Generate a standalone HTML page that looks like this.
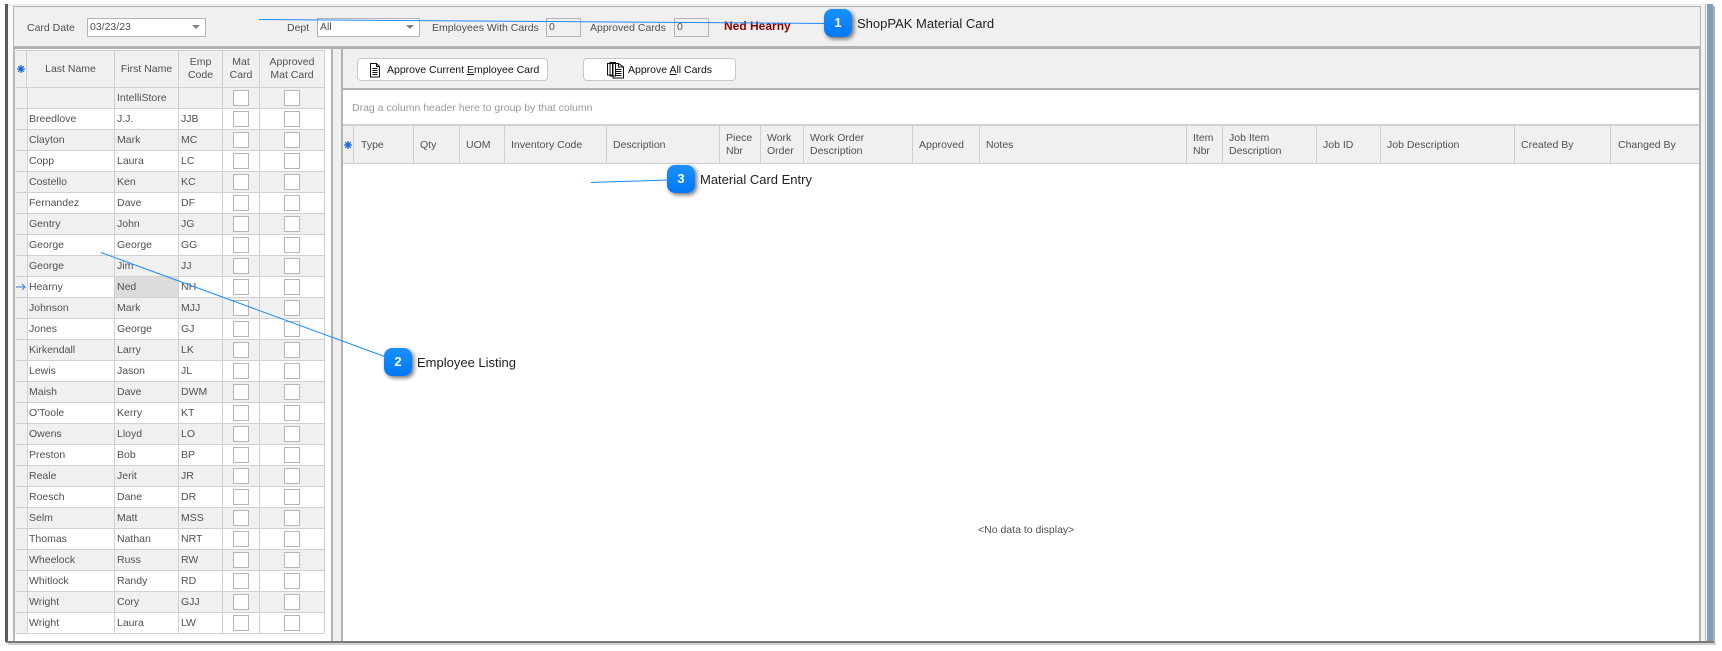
<!DOCTYPE html>
<html><head><meta charset="utf-8"><title>ShopPAK Material Card</title>
<style>
html,body{margin:0;padding:0;background:#fff;width:1722px;height:651px;overflow:hidden}
body{position:relative;font:10.5px/13px "Liberation Sans",sans-serif;color:#505050}
div,span,svg{position:absolute;box-sizing:border-box}
.l{white-space:nowrap}
.in{height:19px;top:18px;background:#fff;border:1px solid #b4b4b4;padding:1px 0 0 2px;line-height:14px}
.tri{width:0;height:0;border:4px solid transparent;border-top:4px solid #808080;border-bottom:0;top:25px}
.h{height:38px;position:absolute;top:0;background:#f0f0f0;border-right:1px solid #d0d0d0;border-bottom:1px solid #d0d0d0;border-top:1px solid #d0d0d0;text-align:center;display:flex;align-items:center;justify-content:center;line-height:13px}
#rows{left:16px;top:88px;width:309px}
.r{position:relative;height:21px;width:309px;border-bottom:1px solid #d0d0d0;background:#fff;border-right:1px solid #d0d0d0}
.r.a{background:#f0f0f0}
.r b,.r i,.r u,.r s,.r em{position:absolute;font:inherit;text-decoration:none;top:0;height:20px;line-height:20px;white-space:nowrap;color:#505050}
.r s{left:0;width:11px;background:#f0f0f0;border-right:1px solid #d0d0d0;height:20px}
.r b{left:13px;width:85px}
.r i{left:101px}
.r u{left:165px}
.c1,.c2,.c3,.c4{position:absolute;top:0;height:20px;width:1px;background:#d0d0d0}
.c1{left:98px}.c2{left:162px}.c3{left:206px}.c4{left:243px}
.k1,.k2{position:absolute;top:2px;width:16px;height:16px;background:#fff;border:1px solid #b6b6b6}
.k1{left:217px}.k2{left:268px}
.hc{position:absolute;top:126px;height:38px;border-right:1px solid #d0d0d0;border-bottom:1px solid #d0d0d0;background:#f0f0f0;display:flex;align-items:center;padding-left:5px;padding-top:1px;line-height:13px;white-space:nowrap}
.btn{top:58px;height:23px;background:#fff;border:1px solid #c8c8c8;border-radius:4px;color:#111;line-height:23px;white-space:nowrap}
.bd{width:28px;height:28px;border-radius:8px;background:linear-gradient(#1b90ff,#0078f5);box-shadow:2px 2px 4px rgba(0,0,0,.55);color:#fff;font:bold 13px/28px "Liberation Sans",sans-serif;text-align:center}
.ct{font-size:13px;line-height:16px;color:#222;white-space:nowrap}
</style></head><body>

<!-- window frame -->
<div style="left:5px;top:4px;width:3px;height:638px;background:#5a5a5a"></div>
<div style="left:8px;top:4px;width:1699px;height:2px;background:#eee"></div>
<div style="left:8px;top:6px;width:5px;height:635px;background:#fafafa"></div>
<div style="left:1701px;top:4px;width:4px;height:638px;background:#f4f4f4"></div>
<div style="left:1705px;top:4px;width:1px;height:638px;background:#b4b4b4"></div>
<div style="left:1707px;top:4px;width:6px;height:638px;background:#7f9fbc"></div>
<div style="left:1713px;top:6px;width:2px;height:637px;background:#b0b0b0"></div>
<div style="left:6px;top:641px;width:1708px;height:2px;background:#7a7a7a"></div>
<div style="left:8px;top:643px;width:1708px;height:2px;background:#d0d0d0"></div>

<!-- top panel -->
<div style="left:13px;top:6px;width:1688px;height:41px;background:#f0f0f0;border:1px solid #b4b4b4;border-bottom:0"></div>
<div style="left:13px;top:46px;width:1688px;height:3px;background:#b2b2b2"></div>
<div class="l" style="left:27px;top:22px">Card Date</div>
<div class="in" style="left:87px;width:119px">03/23/23</div><div class="tri" style="left:192px"></div>
<div class="l" style="left:287px;top:22px">Dept</div>
<div class="in" style="left:317px;width:103px">All</div><div class="tri" style="left:406px"></div>
<div class="l" style="left:432px;top:22px">Employees With Cards</div>
<div class="in" style="left:546px;width:35px;background:#f0f0f0">0</div>
<div class="l" style="left:590px;top:22px">Approved Cards</div>
<div class="in" style="left:674px;width:35px;background:#f0f0f0">0</div>
<div class="l" style="left:724px;top:20px;font-weight:bold;font-size:12px;color:#8b0000">Ned Hearny</div>

<!-- left region -->
<div style="left:13px;top:49px;width:2px;height:592px;background:#b8b8b8"></div>
<div style="left:15px;top:49px;width:316px;height:592px;background:#fff"></div>
<div style="left:15px;top:49px;width:1px;height:585px;background:#f0f0f0"></div>
<div style="left:331px;top:49px;width:2px;height:592px;background:#b2b2b2"></div>
<div style="left:333px;top:49px;width:8px;height:592px;background:#f0f0f0"></div>
<div style="left:341px;top:49px;width:2px;height:592px;background:#b2b2b2"></div>

<!-- left grid header -->
<div class="h" style="left:16px;top:50px;width:11px"><svg width="10" height="10" viewBox="0 0 10 10" style="left:0;top:13px"><g stroke="#1f6fe0" stroke-width="1.3"><path d="M5 1V9M1 5H9M2.2 2.2L7.8 7.8M7.8 2.2L2.2 7.8"/></g><circle cx="5" cy="5" r="2.4" fill="#1f6fe0"/></svg></div>
<div class="h" style="left:27px;top:50px;width:88px">Last Name</div>
<div class="h" style="left:115px;top:50px;width:64px">First Name</div>
<div class="h" style="left:179px;top:50px;width:44px">Emp<br>Code</div>
<div class="h" style="left:223px;top:50px;width:37px">Mat<br>Card</div>
<div class="h" style="left:260px;top:50px;width:65px">Approved<br>Mat Card</div>

<!-- left grid rows -->
<div id="rows">
<div class="r a"><s></s><b></b><i>IntelliStore</i><u></u><span class="c1"></span><span class="c2"></span><span class="c3"></span><span class="c4"></span><span class="k1"></span><span class="k2"></span></div>
<div class="r"><s></s><b>Breedlove</b><i>J.J.</i><u>JJB</u><span class="c1"></span><span class="c2"></span><span class="c3"></span><span class="c4"></span><span class="k1"></span><span class="k2"></span></div>
<div class="r a"><s></s><b>Clayton</b><i>Mark</i><u>MC</u><span class="c1"></span><span class="c2"></span><span class="c3"></span><span class="c4"></span><span class="k1"></span><span class="k2"></span></div>
<div class="r"><s></s><b>Copp</b><i>Laura</i><u>LC</u><span class="c1"></span><span class="c2"></span><span class="c3"></span><span class="c4"></span><span class="k1"></span><span class="k2"></span></div>
<div class="r a"><s></s><b>Costello</b><i>Ken</i><u>KC</u><span class="c1"></span><span class="c2"></span><span class="c3"></span><span class="c4"></span><span class="k1"></span><span class="k2"></span></div>
<div class="r"><s></s><b>Fernandez</b><i>Dave</i><u>DF</u><span class="c1"></span><span class="c2"></span><span class="c3"></span><span class="c4"></span><span class="k1"></span><span class="k2"></span></div>
<div class="r a"><s></s><b>Gentry</b><i>John</i><u>JG</u><span class="c1"></span><span class="c2"></span><span class="c3"></span><span class="c4"></span><span class="k1"></span><span class="k2"></span></div>
<div class="r"><s></s><b>George</b><i>George</i><u>GG</u><span class="c1"></span><span class="c2"></span><span class="c3"></span><span class="c4"></span><span class="k1"></span><span class="k2"></span></div>
<div class="r a"><s></s><b>George</b><i>Jim</i><u>JJ</u><span class="c1"></span><span class="c2"></span><span class="c3"></span><span class="c4"></span><span class="k1"></span><span class="k2"></span></div>
<div class="r"><s><svg width="10" height="8" viewBox="0 0 10 8" style="left:0;top:6px"><path d="M0 4H9M6 1L9 4L6 7" fill="none" stroke="#3b78d8" stroke-width="1"/></svg></s><b>Hearny</b><span style="position:absolute;left:99px;top:0;width:63px;height:20px;background:#dcdcdc"></span><i>Ned</i><u>NH</u><span class="c1"></span><span class="c2"></span><span class="c3"></span><span class="c4"></span><span class="k1"></span><span class="k2"></span></div>
<div class="r a"><s></s><b>Johnson</b><i>Mark</i><u>MJJ</u><span class="c1"></span><span class="c2"></span><span class="c3"></span><span class="c4"></span><span class="k1"></span><span class="k2"></span></div>
<div class="r"><s></s><b>Jones</b><i>George</i><u>GJ</u><span class="c1"></span><span class="c2"></span><span class="c3"></span><span class="c4"></span><span class="k1"></span><span class="k2"></span></div>
<div class="r a"><s></s><b>Kirkendall</b><i>Larry</i><u>LK</u><span class="c1"></span><span class="c2"></span><span class="c3"></span><span class="c4"></span><span class="k1"></span><span class="k2"></span></div>
<div class="r"><s></s><b>Lewis</b><i>Jason</i><u>JL</u><span class="c1"></span><span class="c2"></span><span class="c3"></span><span class="c4"></span><span class="k1"></span><span class="k2"></span></div>
<div class="r a"><s></s><b>Maish</b><i>Dave</i><u>DWM</u><span class="c1"></span><span class="c2"></span><span class="c3"></span><span class="c4"></span><span class="k1"></span><span class="k2"></span></div>
<div class="r"><s></s><b>O'Toole</b><i>Kerry</i><u>KT</u><span class="c1"></span><span class="c2"></span><span class="c3"></span><span class="c4"></span><span class="k1"></span><span class="k2"></span></div>
<div class="r a"><s></s><b>Owens</b><i>Lloyd</i><u>LO</u><span class="c1"></span><span class="c2"></span><span class="c3"></span><span class="c4"></span><span class="k1"></span><span class="k2"></span></div>
<div class="r"><s></s><b>Preston</b><i>Bob</i><u>BP</u><span class="c1"></span><span class="c2"></span><span class="c3"></span><span class="c4"></span><span class="k1"></span><span class="k2"></span></div>
<div class="r a"><s></s><b>Reale</b><i>Jerit</i><u>JR</u><span class="c1"></span><span class="c2"></span><span class="c3"></span><span class="c4"></span><span class="k1"></span><span class="k2"></span></div>
<div class="r"><s></s><b>Roesch</b><i>Dane</i><u>DR</u><span class="c1"></span><span class="c2"></span><span class="c3"></span><span class="c4"></span><span class="k1"></span><span class="k2"></span></div>
<div class="r a"><s></s><b>Selm</b><i>Matt</i><u>MSS</u><span class="c1"></span><span class="c2"></span><span class="c3"></span><span class="c4"></span><span class="k1"></span><span class="k2"></span></div>
<div class="r"><s></s><b>Thomas</b><i>Nathan</i><u>NRT</u><span class="c1"></span><span class="c2"></span><span class="c3"></span><span class="c4"></span><span class="k1"></span><span class="k2"></span></div>
<div class="r a"><s></s><b>Wheelock</b><i>Russ</i><u>RW</u><span class="c1"></span><span class="c2"></span><span class="c3"></span><span class="c4"></span><span class="k1"></span><span class="k2"></span></div>
<div class="r"><s></s><b>Whitlock</b><i>Randy</i><u>RD</u><span class="c1"></span><span class="c2"></span><span class="c3"></span><span class="c4"></span><span class="k1"></span><span class="k2"></span></div>
<div class="r a"><s></s><b>Wright</b><i>Cory</i><u>GJJ</u><span class="c1"></span><span class="c2"></span><span class="c3"></span><span class="c4"></span><span class="k1"></span><span class="k2"></span></div>
<div class="r"><s></s><b>Wright</b><i>Laura</i><u>LW</u><span class="c1"></span><span class="c2"></span><span class="c3"></span><span class="c4"></span><span class="k1"></span><span class="k2"></span></div>
</div>

<!-- right region -->
<div style="left:343px;top:49px;width:1356px;height:39px;background:#f0f0f0"></div>
<div style="left:343px;top:88px;width:1356px;height:2px;background:#b2b2b2"></div>
<div style="left:343px;top:90px;width:1356px;height:551px;background:#fff"></div>
<div style="left:1699px;top:49px;width:2px;height:592px;background:#b2b2b2"></div>

<div class="btn" style="left:357px;width:191px;padding-left:29px">Approve Current <span style="position:static;text-decoration:underline">E</span>mployee Card</div>
<svg width="12" height="15" viewBox="0 0 12 15" style="left:369px;top:63px"><path d="M1.5 .5H7.5L10.5 3.5V14H1.5ZM7.5 .5V3.5H10.5M3.5 5.5H8.5M3.5 7.5H8.5M3.5 9.5H8.5M3.5 11.5H8.5" fill="#fff" stroke="#111" stroke-width="1"/></svg>
<div class="btn" style="left:583px;width:153px;padding-left:44px">Approve <span style="position:static;text-decoration:underline">A</span>ll Cards</div>
<svg width="18" height="17" viewBox="0 0 18 17" style="left:607px;top:62px"><path d="M.5 1.5H5.5V13H.5ZM3 .5H8.5V14H3ZM6 1.5H11.5L16.5 5V16H6ZM11.5 1.5V5H16.5M8 7.5H14.5M8 9.5H14.5M8 11.5H14.5M8 13.5H14.5" fill="#fff" stroke="#111" stroke-width="1"/></svg>

<div class="l" style="left:352px;top:102px;color:#9a9a9a">Drag a column header here to group by that column</div>

<!-- right grid header -->
<div style="left:343px;top:124px;width:1356px;height:2px;background:#d0d0d0"></div>
<div class="hc" style="left:343px;width:11px;padding:0"><svg width="10" height="10" viewBox="0 0 10 10" style="left:0;top:14px"><g stroke="#1f6fe0" stroke-width="1.3"><path d="M5 1V9M1 5H9M2.2 2.2L7.8 7.8M7.8 2.2L2.2 7.8"/></g><circle cx="5" cy="5" r="2.4" fill="#1f6fe0"/></svg></div>
<div class="hc" style="left:354px;width:60px;padding-left:7px">Type</div>
<div class="hc" style="left:414px;width:46px;padding-left:6px">Qty</div>
<div class="hc" style="left:460px;width:45px;padding-left:6px">UOM</div>
<div class="hc" style="left:505px;width:102px;padding-left:6px">Inventory Code</div>
<div class="hc" style="left:607px;width:113px;padding-left:6px">Description</div>
<div class="hc" style="left:720px;width:41px;padding-left:6px">Piece<br>Nbr</div>
<div class="hc" style="left:761px;width:43px;padding-left:6px">Work<br>Order</div>
<div class="hc" style="left:804px;width:109px;padding-left:6px">Work Order<br>Description</div>
<div class="hc" style="left:913px;width:67px;padding-left:6px">Approved</div>
<div class="hc" style="left:980px;width:207px;padding-left:6px">Notes</div>
<div class="hc" style="left:1187px;width:36px;padding-left:6px">Item<br>Nbr</div>
<div class="hc" style="left:1223px;width:94px;padding-left:6px">Job Item<br>Description</div>
<div class="hc" style="left:1317px;width:64px;padding-left:6px">Job ID</div>
<div class="hc" style="left:1381px;width:134px;padding-left:6px">Job Description</div>
<div class="hc" style="left:1515px;width:96px;padding-left:6px">Created By</div>
<div class="hc" style="left:1611px;width:88px;padding-left:7px;border-right:0">Changed By</div>

<div class="l" style="left:978px;top:524px;color:#505050">&lt;No data to display&gt;</div>

<!-- callouts -->
<svg width="1722" height="651" style="left:0;top:0"><g fill="none" stroke="#1a8cff" stroke-width="1"><path d="M259 19.5L826 23.5"/><path d="M101 252.5L386 357"/><path d="M591 182.5L669 180"/></g></svg>
<div class="bd" style="left:824px;top:9px">1</div>
<div class="ct" style="left:857px;top:16px">ShopPAK Material Card</div>
<div class="bd" style="left:384px;top:348px">2</div>
<div class="ct" style="left:417px;top:355px">Employee Listing</div>
<div class="bd" style="left:667px;top:165px">3</div>
<div class="ct" style="left:700px;top:172px">Material Card Entry</div>
</body></html>
